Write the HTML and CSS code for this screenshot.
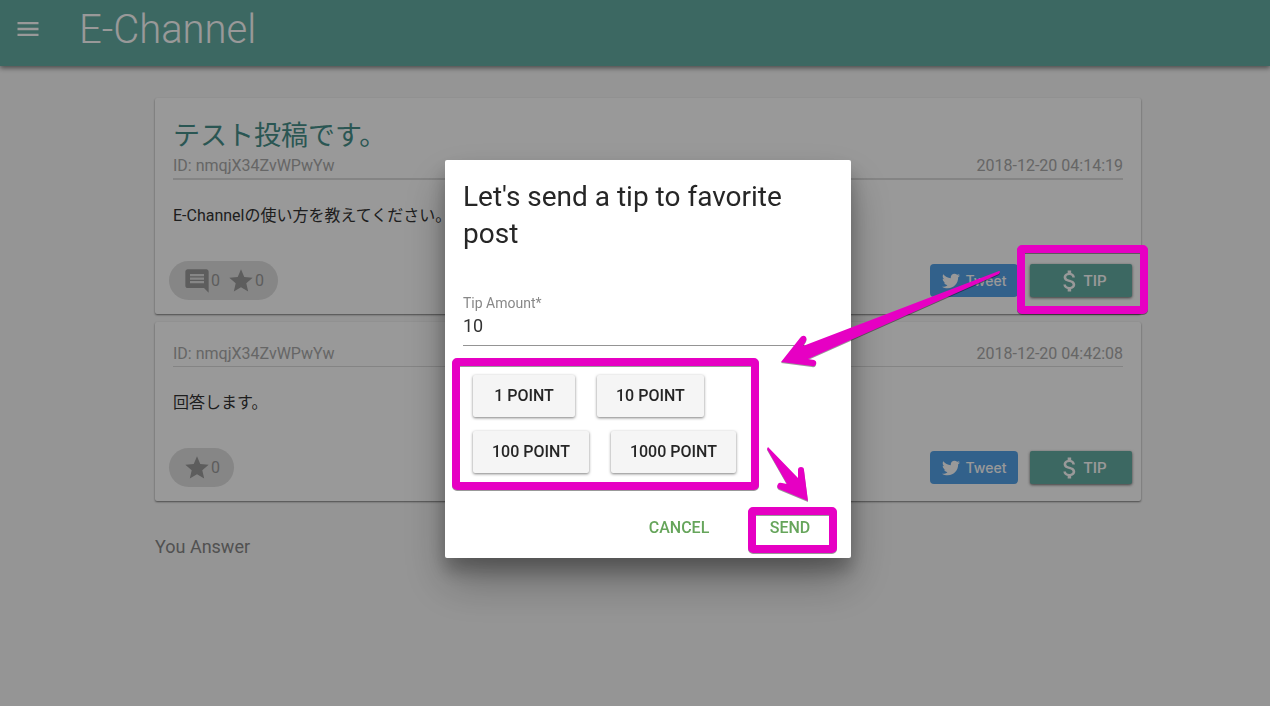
FILE: index.html
```html
<!DOCTYPE html>
<html lang="ja">
<head>
<meta charset="utf-8">
<meta name="viewport" content="width=device-width, initial-scale=1">
<title>E-Channel</title>
<link rel="stylesheet" href="styles.css">
</head>
<body>
<svg class="sprite" aria-hidden="true">
  <symbol id="i-menu" viewBox="0 0 24 24"><path d="M3 18h18v-2H3v2zm0-5h18v-2H3v2zm0-7v2h18V6H3z"/></symbol>
  <symbol id="i-comment" viewBox="0 0 24 24"><path d="M21.99 4c0-1.100-.89-2-1.990-2H4c-1.100 0-2 .9-2 2v12c0 1.100.9 2 2 2h14l4 4-.01-18zM18 14H6v-2h12v2zm0-3H6V9h12v2zm0-3H6V6h12v2z"/></symbol>
  <symbol id="i-star" viewBox="0 0 24 24"><path d="M12 17.270L18.180 21l-1.640-7.030L22 9.240l-7.190-.61L12 2 9.190 8.630 2 9.240l5.460 4.730L5.820 21z"/></symbol>
  <symbol id="i-dollar" viewBox="0 0 24 24"><path d="M11.800 10.900c-2.270-.59-3-1.200-3-2.150 0-1.090 1.010-1.850 2.700-1.850 1.780 0 2.440.85 2.500 2.100h2.210c-.07-1.720-1.120-3.300-3.210-3.810V3h-3v2.160c-1.940.42-3.500 1.680-3.500 3.610 0 2.310 1.910 3.460 4.700 4.130 2.500.6 3 1.480 3 2.410 0 .69-.49 1.790-2.700 1.790-2.060 0-2.870-.92-2.980-2.100h-2.200c.12 2.190 1.760 3.420 3.680 3.830V21h3v-2.150c1.950-.37 3.500-1.500 3.500-3.550 0-2.840-2.430-3.810-4.700-4.400z"/></symbol>
  <symbol id="i-twitter" viewBox="0 0 24 24"><path d="M23.954 4.569c-.885.389-1.830.654-2.825.775 1.014-.611 1.794-1.574 2.163-2.723-.951.555-2.005.959-3.127 1.184-.896-.959-2.173-1.559-3.591-1.559-2.717 0-4.920 2.203-4.920 4.917 0 .390.045.765.127 1.124C7.691 8.094 4.066 6.130 1.640 3.161c-.427.722-.666 1.561-.666 2.475 0 1.710.870 3.213 2.188 4.096-.807-.026-1.566-.248-2.228-.616v.061c0 2.385 1.693 4.374 3.946 4.827-.413.111-.849.171-1.296.171-.314 0-.615-.030-.916-.086.631 1.953 2.445 3.377 4.604 3.417-1.680 1.319-3.809 2.105-6.102 2.105-.390 0-.779-.023-1.170-.067 2.189 1.394 4.768 2.209 7.557 2.209 9.054 0 13.999-7.496 13.999-13.986 0-.209 0-.420-.015-.630.961-.689 1.800-1.560 2.460-2.548z"/></symbol>
</svg>

<header class="topbar">
  <button class="menu-button" type="button" aria-label="Menu"><svg class="icon"><use href="#i-menu"/></svg></button>
  <h1 class="brand">E-Channel</h1>
</header>

<main class="page">
  <article class="card">
    <h2 class="post-title">テスト投稿です。</h2>
    <div class="meta meta-strong"><span>ID: nmqjX34ZvWPwYw</span><time>2018-12-20 04:14:19</time></div>
    <p class="post-body">E-Channelの使い方を教えてください。</p>
    <footer class="card-footer">
      <div class="chip">
        <span class="count"><svg class="icon"><use href="#i-comment"/></svg>0</span>
        <span class="count"><svg class="icon"><use href="#i-star"/></svg>0</span>
      </div>
      <div class="actions">
        <button class="tweet" type="button"><svg class="icon-small"><use href="#i-twitter"/></svg>Tweet</button>
        <button class="tip" type="button"><svg class="icon"><use href="#i-dollar"/></svg>TIP</button>
      </div>
    </footer>
  </article>
  <article class="card">
    <div class="meta"><span>ID: nmqjX34ZvWPwYw</span><time>2018-12-20 04:42:08</time></div>
    <p class="post-body">回答します。</p>
    <footer class="card-footer">
      <div class="chip">
        <span class="count"><svg class="icon"><use href="#i-star"/></svg>0</span>
      </div>
      <div class="actions">
        <button class="tweet" type="button"><svg class="icon-small"><use href="#i-twitter"/></svg>Tweet</button>
        <button class="tip" type="button"><svg class="icon"><use href="#i-dollar"/></svg>TIP</button>
      </div>
    </footer>
  </article>
  <p class="answer-heading">You Answer</p>
</main>

<div class="backdrop">
  <section class="dialog" role="dialog" aria-modal="true" aria-labelledby="dialog-title">
    <h2 class="dialog-title" id="dialog-title">Let's send a tip to favorite post</h2>
    <div class="field">
      <label class="field-label" for="amount">Tip Amount*</label>
      <input class="field-input" id="amount" type="text" value="10">
    </div>
    <div class="points">
      <div class="points-row">
        <button class="point" type="button">1 POINT</button>
        <button class="point" type="button">10 POINT</button>
      </div>
      <div class="points-row">
        <button class="point" type="button">100 POINT</button>
        <button class="point" type="button">1000 POINT</button>
      </div>
    </div>
    <div class="dialog-actions">
      <button class="flat" type="button">CANCEL</button>
      <button class="flat" type="button">SEND</button>
    </div>
    <svg class="guide" viewBox="445 160 406 398" aria-hidden="true">
      <g class="guide-ring">
        <rect x="456" y="362" width="299" height="124" rx="1"/>
        <rect x="752" y="511" width="81" height="38" rx="1"/>
        <rect x="1021" y="249" width="123" height="61" rx="1"/>
      </g>
      <g class="guide-arrow">
        <path d="M781 362L800 338Q803 334 806 337Q807 339 806 341L803 346L999 271Q1001 271 999 274L808 359L814 360Q817 361 816 364Q815 367 812 366Z"/>
        <path d="M768 447L798 478V470Q798 467 801 467Q804 467 804 470L808 501L779 489Q776 487 778 484Q779 482 782 483L787 484L767 449Z"/>
      </g>
    </svg>
  </section>
</div>
</body>
</html>
```
FILE: styles.css
```css
* {
  box-sizing: border-box;
}

body {
  margin: 0;
  min-height: 100vh;
  background: #f9f9f9;
  color: #333;
  font: 16px/24px Roboto, "Noto Sans CJK JP", sans-serif;
}

h1, h2, p {
  margin: 0;
  font-weight: 400;
}

button {
  border: 0;
  padding: 0;
  background: none;
  color: inherit;
  font: 500 16px/24px Roboto, sans-serif;
  cursor: pointer;
}

svg {
  fill: currentColor;
}

.sprite {
  position: absolute;
  width: 0;
  height: 0;
}

.icon {
  flex: none;
  display: block;
  width: 28px;
  height: 28px;
}

.icon-small {
  flex: none;
  width: 18px;
  height: 18px;
}

.topbar {
  display: flex;
  align-items: center;
  gap: 37px;
  height: 66px;
  padding: 0 14px 8px;
  background: #64ada3;
  color: #fff;
  box-shadow: 0 2px 5px rgba(0, 0, 0, 0.5);
}

.brand {
  padding-top: 2px;
  font-size: 40px;
  font-weight: 300;
  line-height: 48px;
}

.page {
  display: flex;
  flex-direction: column;
  gap: 8px;
  margin: 32px 129px 0 155px;
}

.card {
  padding: 20px 9px 14px 14px;
  border-radius: 2px;
  background: #fff;
  box-shadow: 0 1px 2px rgba(0, 0, 0, 0.5);
}

.post-title {
  padding: 0 4px;
  color: #46908a;
  font-size: 27px;
  line-height: 36px;
}

.meta {
  display: flex;
  justify-content: space-between;
  margin: 0 9px 0 4px;
  border-bottom: 1px solid #ddd;
  color: #aaa;
  line-height: 24px;
}

.meta-strong {
  border-bottom-width: 2px;
}

.post-body {
  padding: 24px 4px 33px;
}

.card-footer,
.actions,
.chip,
.count {
  display: flex;
  align-items: center;
}

.card-footer {
  justify-content: space-between;
}

.chip {
  gap: 7px;
  height: 39px;
  padding: 0 14px;
  border-radius: 20px;
  background: #e0e0e0;
  color: #9b9b9b;
}

.actions {
  gap: 12px;
}

.tweet,
.tip {
  display: flex;
  align-items: center;
  justify-content: center;
  height: 33px;
  color: #fff;
}

.tweet {
  gap: 6px;
  width: 88px;
  border-radius: 4px;
  background: #54a2e8;
  font: 500 14px/20px Inter, sans-serif;
}

.tip {
  width: 102px;
  border-radius: 2px;
  background: #64ada3;
  box-shadow: 0 1px 3px rgba(0, 0, 0, 0.6);
  font-size: 15px;
}

.answer-heading {
  margin-top: 26px;
  color: #888;
  font-size: 18px;
}

.backdrop {
  position: fixed;
  inset: 0;
  display: flex;
  align-items: center;
  justify-content: center;
  padding: 12px 0 0 26px;
  background: rgba(0, 0, 0, 0.4);
}

.dialog {
  position: relative;
  width: 406px;
  padding: 18px 18px 9px;
  border-radius: 2px;
  background: #fff;
  color: #262626;
  box-shadow: 0 12px 18px rgba(0, 0, 0, 0.25), 0 24px 44px rgba(0, 0, 0, 0.3);
}

.dialog-title {
  font-size: 28px;
  line-height: 37px;
}

.field {
  display: flex;
  flex-direction: column;
  margin-top: 42px;
}

.field-label {
  color: #888;
  font-size: 14px;
  line-height: 18px;
}

.field-input {
  width: 100%;
  height: 34px;
  padding: 0 0 6px;
  border: 0;
  border-bottom: 1px solid #949494;
  outline: 0;
  color: #333;
  font: 18px/28px Roboto, sans-serif;
}

.points {
  display: grid;
  gap: 14px;
  margin: 29px 10px 0;
}

.points-row {
  display: flex;
  gap: 22px;
}

.point {
  min-width: 102px;
  height: 42px;
  padding: 0 19px;
  border-radius: 2px;
  background: #f5f5f5;
  box-shadow: 0 1px 3px rgba(0, 0, 0, 0.5);
}

.dialog-actions {
  display: flex;
  justify-content: flex-end;
  gap: 9px;
  margin: 34px -8px 0 0;
}

.flat {
  width: 102px;
  height: 42px;
  color: #66a55b;
}

.dialog-actions {
  margin-right: -8px;
}

.guide {
  position: absolute;
  inset: 0;
  width: 100%;
  height: 100%;
  overflow: visible;
  pointer-events: none;
  filter: drop-shadow(0 1px 0 rgba(0, 0, 0, 0.4));
}

.guide-ring {
  fill: none;
  stroke: #e600c3;
  stroke-width: 8px;
  stroke-linejoin: round;
}

.guide-arrow {
  fill: #e600c3;
}
```
